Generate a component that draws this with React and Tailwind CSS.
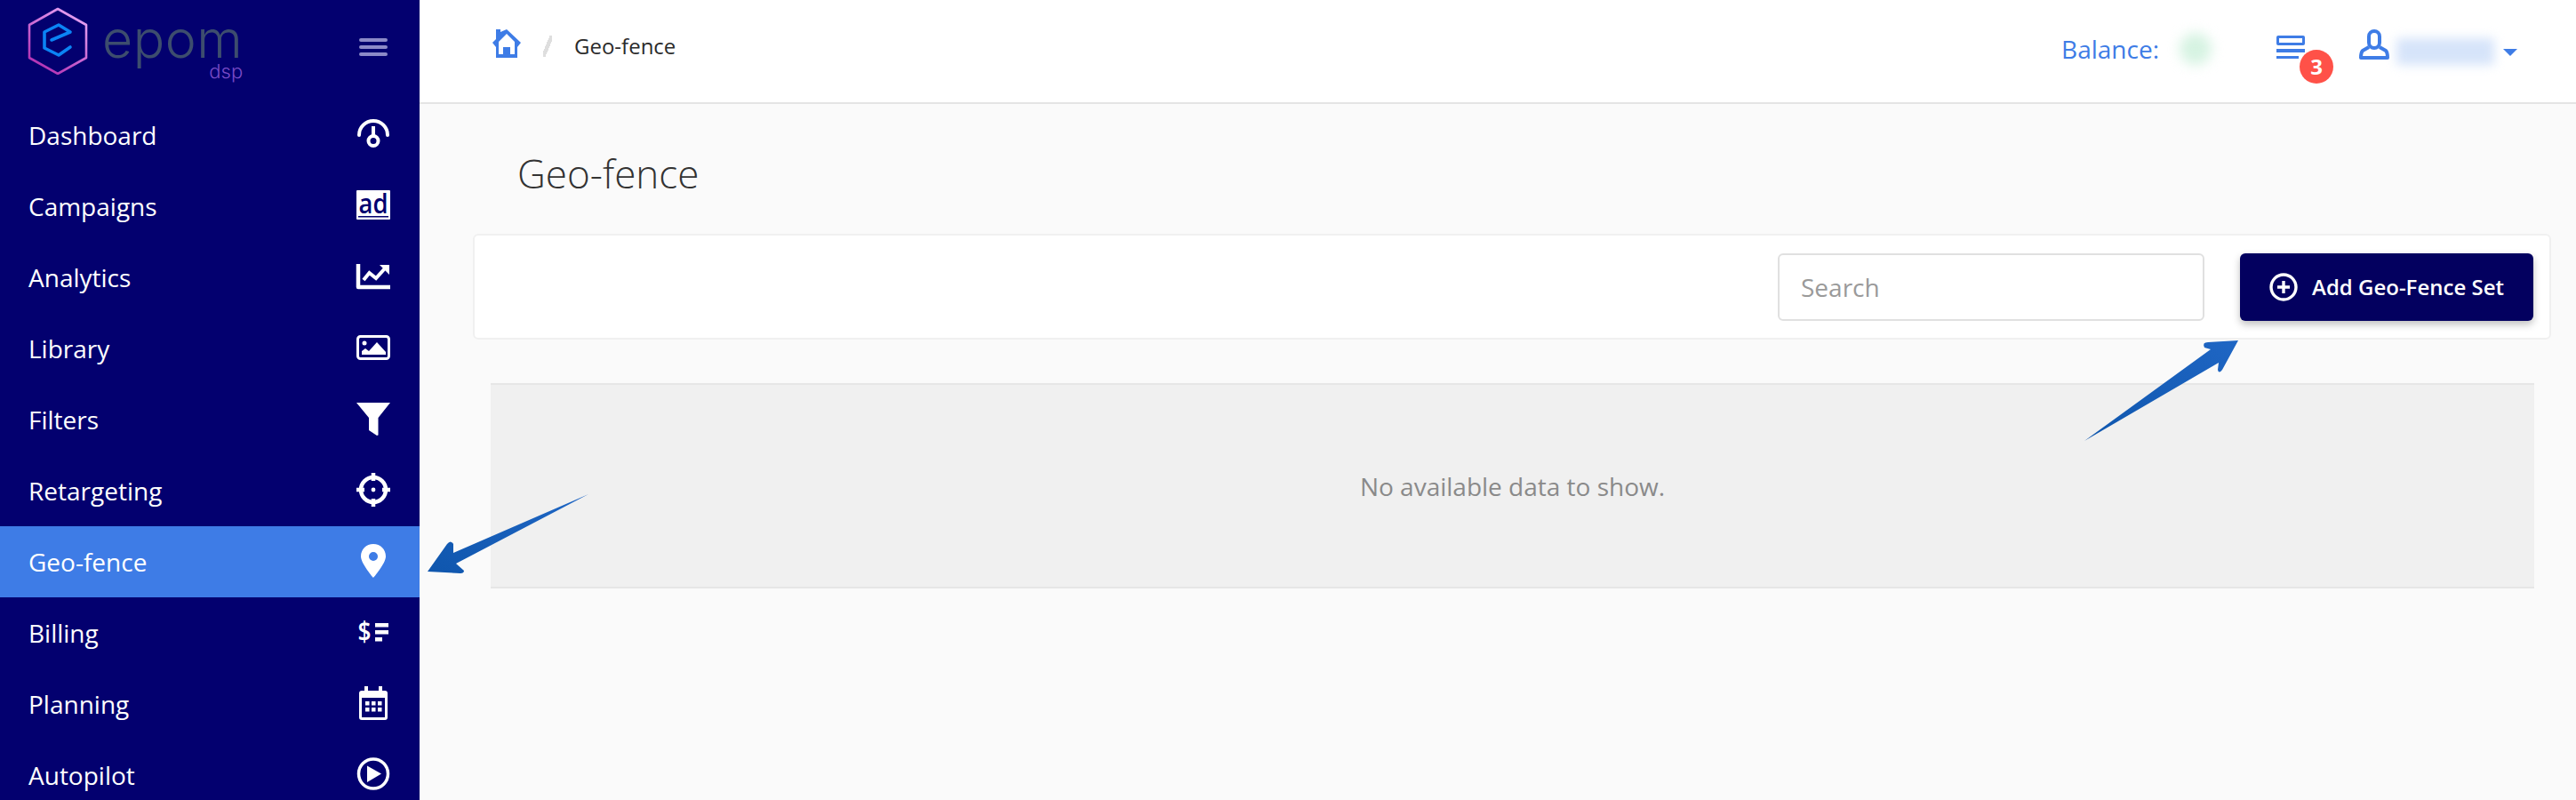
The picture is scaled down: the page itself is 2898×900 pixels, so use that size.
const NAVY = "#03006f";

function DashIcon() {
  return (
    <svg viewBox="0 0 40 40" className="w-10 h-10" fill="none" stroke="#fff" strokeWidth="4">
      <path d="M4 20A16 16 0 0 1 36 20" strokeLinecap="round" />
      <path d="M20 10V20" />
      <circle cx="20" cy="26.5" r="5.5" />
    </svg>
  );
}

function AdIcon() {
  return (
    <svg viewBox="0 0 40 40" className="w-10 h-10 overflow-visible">
      <rect x="1" y="2" width="38" height="33" rx="1" fill="#fff" />
      <text x="20" y="28" textAnchor="middle" fontFamily="Open Sans, sans-serif" fontSize="30" fontWeight="600" textLength="33" lengthAdjust="spacingAndGlyphs" fill={NAVY}>ad</text>
      <rect x="3" y="31" width="34" height="1.5" fill={NAVY} />
    </svg>
  );
}

function ChartIcon() {
  return (
    <svg viewBox="0 0 40 40" className="w-10 h-10" fill="none" stroke="#fff">
      <path d="M3 5V31H39" strokeWidth="4.5" strokeLinejoin="round" />
      <path d="M9 23L15.5 15L23 21L33 10" strokeWidth="4" />
      <path d="M27 6H38V17Z" fill="#fff" stroke="none" />
    </svg>
  );
}

function ImageIcon() {
  return (
    <svg viewBox="0 0 40 40" className="w-10 h-10" fill="none">
      <rect x="2.5" y="6.5" width="35" height="25" rx="3" stroke="#fff" strokeWidth="3" />
      <circle cx="10" cy="14" r="2.5" fill="#fff" />
      <path d="M7 27V23L11 20L15 23L24 13L34 24V27Z" fill="#fff" />
    </svg>
  );
}

function FilterIcon() {
  return (
    <svg viewBox="0 0 40 40" className="w-10 h-10">
      <path d="M1 1H39L25.5 18V37.5L24 38L15 32V18Z" fill="#fff" />
    </svg>
  );
}

function TargetIcon() {
  return (
    <svg viewBox="0 0 40 40" className="w-10 h-10" fill="none" stroke="#fff">
      <circle cx="20" cy="19" r="14" strokeWidth="4.5" />
      <path d="M20 0V9M20 29V38M1 19H10M30 19H39" strokeWidth="4.5" />
      <circle cx="20" cy="19" r="2.4" fill="#fff" stroke="none" />
    </svg>
  );
}

function PinIcon() {
  return (
    <svg viewBox="0 0 40 40" className="w-10 h-10">
      <path
        fillRule="evenodd"
        d="M20 0C12 0 6 6 6 14C6 22 20 38 20 38C20 38 34 22 34 14C34 6 28 0 20 0ZM20 9A5 5 0 1 1 20 19A5 5 0 1 1 20 9Z"
        fill="#fff"
      />
    </svg>
  );
}

function BillIcon() {
  return (
    <svg viewBox="0 0 40 40" className="w-10 h-10 overflow-visible">
      <text x="10" y="29" textAnchor="middle" fontFamily="Open Sans, sans-serif" fontSize="31" fontWeight="600" textLength="15" lengthAdjust="spacingAndGlyphs" fill="#fff">$</text>
      <rect x="22" y="9" width="15" height="4.5" fill="#fff" />
      <rect x="22" y="17" width="15" height="4.5" fill="#fff" />
      <rect x="22" y="25" width="8" height="4.5" fill="#fff" />
    </svg>
  );
}

function CalendarIcon() {
  return (
    <svg viewBox="0 0 40 40" className="w-10 h-10" fill="#fff">
      <path
        fillRule="evenodd"
        d="M7 5H10V0H14V5H26V0H30V5H33A3 3 0 0 1 36 8V35A3 3 0 0 1 33 38H7A3 3 0 0 1 4 35V8A3 3 0 0 1 7 5ZM7 13V35H33V13Z"
      />
      {[11, 18, 25].map((x) =>
        [17, 24].map((y) => <rect key={`${x}-${y}`} x={x} y={y} width="4.5" height="4.5" />)
      )}
    </svg>
  );
}

function PlayIcon() {
  return (
    <svg viewBox="0 0 40 40" className="w-10 h-10" fill="none">
      <circle cx="20" cy="18.5" r="16.5" stroke="#fff" strokeWidth="3.5" />
      <path d="M13 9.5L29 18.5L13 28Z" fill="#fff" />
    </svg>
  );
}

const navItems = [
  { label: "Dashboard", icon: DashIcon },
  { label: "Campaigns", icon: AdIcon },
  { label: "Analytics", icon: ChartIcon },
  { label: "Library", icon: ImageIcon },
  { label: "Filters", icon: FilterIcon },
  { label: "Retargeting", icon: TargetIcon },
  { label: "Geo-fence", icon: PinIcon, active: true },
  { label: "Billing", icon: BillIcon },
  { label: "Planning", icon: CalendarIcon },
  { label: "Autopilot", icon: PlayIcon },
];

function Logo() {
  return (
    <div className="flex items-start">
      <svg viewBox="0 0 68 76" className="w-[68px] h-[76px] mt-[8px] ml-[-1px] shrink-0" fill="none">
        <defs>
          <linearGradient id="hex" x1="0.8" y1="0" x2="0.2" y2="1">
            <stop offset="0" stopColor="#e6a6f5" />
            <stop offset="1" stopColor="#b02bb0" />
          </linearGradient>
        </defs>
        <path d="M34 2L66 20V57L34 75L2 57V20Z" stroke="url(#hex)" strokeWidth="2.6" strokeLinejoin="round" />
        <path d="M48 45L35 54L19 46V28L35 20L48 28L27 37" stroke="#0b84f5" strokeWidth="3.6" strokeLinecap="round" strokeLinejoin="round" />
      </svg>
      <div className="flex flex-col items-end ml-[16px]">
        <span className="font-['Inter',sans-serif] font-light text-[59px] leading-[46px] tracking-[0.5px] text-[#3d4d6e] mt-[21px]">epom</span>
        <span className="font-['Inter',sans-serif] font-light text-[22px] leading-[24px] text-[#7a4cc7] mt-[1px]">dsp</span>
      </div>
    </div>
  );
}

function Sidebar() {
  return (
    <aside className="w-[472px] h-[900px] shrink-0 overflow-hidden bg-[#03006f] text-white">
      <div className="h-[112px] flex justify-between pl-[32px] pr-[36px]">
        <Logo />
        <div className="w-[32px] mt-[43px] flex flex-col gap-[4px]">
          <div className="h-[4px] rounded-full bg-[#8c8ac8]" />
          <div className="h-[4px] rounded-full bg-[#8c8ac8]" />
          <div className="h-[4px] rounded-full bg-[#8c8ac8]" />
        </div>
      </div>
      {navItems.map((item) => {
        const Icon = item.icon;
        return (
          <div
            key={item.label}
            className={`h-[80px] flex items-center justify-between pl-[32px] pr-[32px] ${item.active ? "bg-[#3e7ce6]" : ""}`}
          >
            <span className="text-[28px]">{item.label}</span>
            <Icon />
          </div>
        );
      })}
    </aside>
  );
}

function Header() {
  return (
    <header className="h-[117px] shrink-0 bg-white border-b-2 border-[#e4e4e4] flex justify-between pl-[82px] pr-[66px]">
      <div className="flex items-start">
        <svg viewBox="0 0 32 32" className="w-[32px] h-[32px] mt-[33px]" fill="#3e7ce6">
          <path
            fillRule="evenodd"
            d="M4 0H9V3L16 0L32 15L28 20V32H4V20L0 15L4 11ZM16 5L7 14V28H12V20H20V28H25V14Z"
          />
        </svg>
        <span className="w-[10px] h-[24px] ml-[25px] mt-[40px] bg-[linear-gradient(to_bottom_right,transparent_38%,#dedede_38%,#dedede_62%,transparent_62%)]" />
        <span className="text-[24px] leading-[32px] text-[#2b2b2b] ml-[25px] mt-[36px]">Geo-fence</span>
      </div>
      <div className="flex items-start text-[#3e7ce6]">
        <span className="text-[28px] leading-[38px] mt-[36px]">Balance:</span>
        <span className="w-[36px] h-[36px] ml-[23px] mt-[37px] rounded-full bg-[#d6f3e2] blur-[7px]" />
        <div className="relative w-[32px] h-[26px] ml-[73px] mt-[40px] flex flex-col gap-[4px]">
          <div className="h-[12px] border-[3px] border-[#3e7ce6] rounded-[2px]" />
          <div className="h-[4px] bg-[#3e7ce6]" />
          <div className="h-[4px] w-[25px] bg-[#3e7ce6]" />
          <span className="absolute left-[26px] top-[16px] w-[38px] h-[38px] rounded-full bg-[#ff5148] text-white text-[24px] font-bold flex items-center justify-center">3</span>
        </div>
        <svg viewBox="0 0 34 34" className="w-[34px] h-[34px] ml-[61px] mt-[33px]" fill="none" stroke="#3e7ce6" strokeWidth="4">
          <path d="M11 11V8A6 6 0 0 1 23 8V15A6 6 0 0 1 11 15Z" />
          <path d="M11 20L4 24Q2 26 2 32H32Q32 26 30 24L23 20" strokeLinejoin="round" />
        </svg>
        <span className="w-[110px] h-[30px] ml-[8px] mt-[43px] bg-[#d6e4fa] blur-[6px]" />
        <span className="w-0 h-0 ml-[10px] mt-[55px] border-x-[8px] border-x-transparent border-t-[8px] border-t-[#3e7ce6]" />
      </div>
    </header>
  );
}

function Arrows() {
  return (
    <svg className="absolute left-0 top-0 w-[2898px] h-[900px] pointer-events-none" viewBox="0 0 2898 900">
      <defs>
        <linearGradient id="arrowA" x1="0" y1="1" x2="1" y2="0">
          <stop offset="0" stopColor="#0f56ad" />
          <stop offset="1" stopColor="#1f66c4" />
        </linearGradient>
      </defs>
      <path d="M662 556L513 634L522 642Q522 645 518 645L481 643L503 612Q507 607 510 612V622Z" fill="url(#arrowA)" />
      <path d="M2345 496L2487 393L2480 391Q2477 385 2484 385L2518 383L2500 416Q2496 421 2495 416L2496 408Z" fill="url(#arrowA)" />
    </svg>
  );
}

export default function App() {
  return (
    <div className="relative flex h-[900px] w-[2898px] overflow-hidden font-['Open_Sans',sans-serif]">
      <Sidebar />
      <div className="flex-1 flex flex-col bg-[#fafafa]">
        <Header />
        <h1 className="ml-[110px] mt-[48px] h-[60px] text-[44px] leading-[60px] font-light text-[#333]">Geo-fence</h1>
        <div className="ml-[60px] mr-[28px] mt-[38px] h-[119px] bg-white border-2 border-[#f0f0f0] rounded-[6px] flex items-center justify-end gap-[40px] pr-[18px]">
          <input
            placeholder="Search"
            className="w-[480px] h-[76px] bg-white border-2 border-[#e0e0e0] rounded-[6px] px-[24px] text-[28px] placeholder:text-[#9a9a9a] outline-none"
          />
          <button className="w-[330px] h-[76px] bg-[#03005f] rounded-[6px] text-white text-[24px] font-semibold flex items-center justify-center gap-[16px] shadow-[0_4px_8px_rgba(0,0,0,0.25)]">
            <svg viewBox="0 0 32 32" className="w-[32px] h-[32px]" fill="none" stroke="#fff">
              <circle cx="16" cy="16" r="14" strokeWidth="3.4" />
              <path d="M16 9V23M9 16H23" strokeWidth="3.4" />
            </svg>
            Add Geo-Fence Set
          </button>
        </div>
        <div className="ml-[80px] mr-[47px] mt-[49px] h-[231px] bg-[#f0f0f0] border-y-2 border-[#e6e6e6] flex items-center justify-center text-[28px] text-[#8a8a8a]">
          No available data to show.
        </div>
      </div>
      <Arrows />
    </div>
  );
}
